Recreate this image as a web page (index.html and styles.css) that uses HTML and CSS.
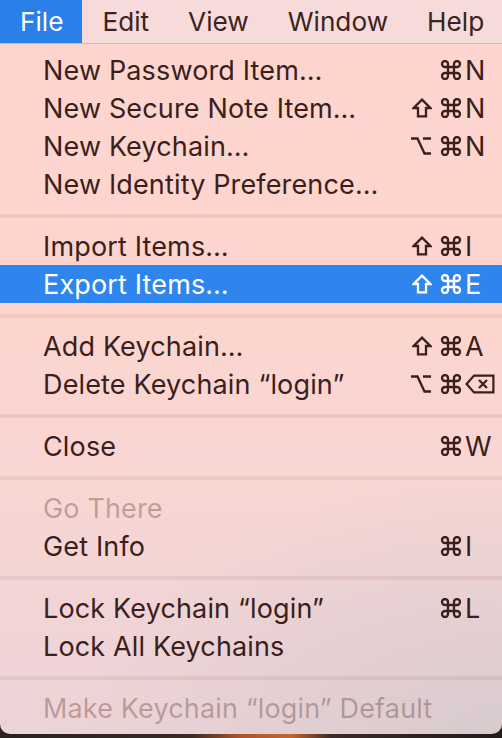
FILE: index.html
```html
<!DOCTYPE html>
<html lang="en">
<head>
<meta charset="utf-8">
<title>Keychain File Menu</title>
<link rel="stylesheet" href="styles.css">
</head>
<body>
<div class="screen">
  <header class="menubar">
    <span class="mb-item active">File</span>
    <span class="mb-item">Edit</span>
    <span class="mb-item">View</span>
    <span class="mb-item">Window</span>
    <span class="mb-item">Help</span>
  </header>
  <div class="menu">
    <div class="row">
      <span class="label">New Password Item…</span>
      <span class="mods"><svg class="ic cmd" viewBox="2 2 20 20"><path d="M15 6v12a3 3 0 1 0 3-3H6a3 3 0 1 0 3 3V6a3 3 0 1 0-3 3h12a3 3 0 1 0-3-3"/></svg></span>
      <span class="key">N</span>
    </div>
    <div class="row">
      <span class="label">New Secure Note Item…</span>
      <span class="mods"><svg class="ic shift" viewBox="0 0 20 20"><path d="M10 1.6 18.4 10H14v8.4H6V10H1.6Z"/></svg><svg class="ic cmd" viewBox="2 2 20 20"><path d="M15 6v12a3 3 0 1 0 3-3H6a3 3 0 1 0 3 3V6a3 3 0 1 0-3 3h12a3 3 0 1 0-3-3"/></svg></span>
      <span class="key">N</span>
    </div>
    <div class="row">
      <span class="label">New Keychain…</span>
      <span class="mods"><svg class="ic opt" viewBox="0 0 22 20"><path d="M1 2.5h6.5l7 15H21M13 2.5h8"/></svg><svg class="ic cmd" viewBox="2 2 20 20"><path d="M15 6v12a3 3 0 1 0 3-3H6a3 3 0 1 0 3 3V6a3 3 0 1 0-3 3h12a3 3 0 1 0-3-3"/></svg></span>
      <span class="key">N</span>
    </div>
    <div class="row">
      <span class="label">New Identity Preference…</span>
    </div>
    <div class="sep"></div>
    <div class="row">
      <span class="label">Import Items…</span>
      <span class="mods"><svg class="ic shift" viewBox="0 0 20 20"><path d="M10 1.6 18.4 10H14v8.4H6V10H1.6Z"/></svg><svg class="ic cmd" viewBox="2 2 20 20"><path d="M15 6v12a3 3 0 1 0 3-3H6a3 3 0 1 0 3 3V6a3 3 0 1 0-3 3h12a3 3 0 1 0-3-3"/></svg></span>
      <span class="key">I</span>
    </div>
    <div class="row selected">
      <span class="label">Export Items…</span>
      <span class="mods"><svg class="ic shift" viewBox="0 0 20 20"><path d="M10 1.6 18.4 10H14v8.4H6V10H1.6Z"/></svg><svg class="ic cmd" viewBox="2 2 20 20"><path d="M15 6v12a3 3 0 1 0 3-3H6a3 3 0 1 0 3 3V6a3 3 0 1 0-3 3h12a3 3 0 1 0-3-3"/></svg></span>
      <span class="key">E</span>
    </div>
    <div class="sep"></div>
    <div class="row">
      <span class="label">Add Keychain…</span>
      <span class="mods"><svg class="ic shift" viewBox="0 0 20 20"><path d="M10 1.6 18.4 10H14v8.4H6V10H1.6Z"/></svg><svg class="ic cmd" viewBox="2 2 20 20"><path d="M15 6v12a3 3 0 1 0 3-3H6a3 3 0 1 0 3 3V6a3 3 0 1 0-3 3h12a3 3 0 1 0-3-3"/></svg></span>
      <span class="key">A</span>
    </div>
    <div class="row">
      <span class="label">Delete Keychain “login”</span>
      <span class="mods"><svg class="ic opt" viewBox="0 0 22 20"><path d="M1 2.5h6.5l7 15H21M13 2.5h8"/></svg><svg class="ic cmd" viewBox="2 2 20 20"><path d="M15 6v12a3 3 0 1 0 3-3H6a3 3 0 1 0 3 3V6a3 3 0 1 0-3 3h12a3 3 0 1 0-3-3"/></svg></span>
      <span class="key"><svg class="ic del" viewBox="0 0 30 20"><path d="M9 1.6h19.4v16.8H9L1.6 10Z"/><path d="M14 6l8 8M22 6l-8 8"/></svg></span>
    </div>
    <div class="sep"></div>
    <div class="row">
      <span class="label">Close</span>
      <span class="mods"><svg class="ic cmd" viewBox="2 2 20 20"><path d="M15 6v12a3 3 0 1 0 3-3H6a3 3 0 1 0 3 3V6a3 3 0 1 0-3 3h12a3 3 0 1 0-3-3"/></svg></span>
      <span class="key">W</span>
    </div>
    <div class="sep"></div>
    <div class="row disabled">
      <span class="label">Go There</span>
    </div>
    <div class="row">
      <span class="label">Get Info</span>
      <span class="mods"><svg class="ic cmd" viewBox="2 2 20 20"><path d="M15 6v12a3 3 0 1 0 3-3H6a3 3 0 1 0 3 3V6a3 3 0 1 0-3 3h12a3 3 0 1 0-3-3"/></svg></span>
      <span class="key">I</span>
    </div>
    <div class="sep"></div>
    <div class="row">
      <span class="label">Lock Keychain “login”</span>
      <span class="mods"><svg class="ic cmd" viewBox="2 2 20 20"><path d="M15 6v12a3 3 0 1 0 3-3H6a3 3 0 1 0 3 3V6a3 3 0 1 0-3 3h12a3 3 0 1 0-3-3"/></svg></span>
      <span class="key">L</span>
    </div>
    <div class="row">
      <span class="label">Lock All Keychains</span>
    </div>
    <div class="sep"></div>
    <div class="row disabled">
      <span class="label">Make Keychain “login” Default</span>
    </div>
  </div>
</div>
</body>
</html>
```

FILE: styles.css
```css
* { box-sizing: border-box; }

html, body {
  margin: 0;
  padding: 0;
}

body {
  width: 502px;
  height: 738px;
  overflow: hidden;
  font-family: Inter, "Noto Sans", "Liberation Sans", sans-serif;
  font-size: 26px;
  color: #3a1f1c;
  background: linear-gradient(90deg, #2a2220 0%, #3a2a24 38%, #b0552c 48%, #c4662e 58%, #3b2a25 66%, #231c1b 100%);
}

.screen {
  display: flex;
  flex-direction: column;
  width: 502px;
  height: 738px;
}

.menubar {
  display: flex;
  height: 44px;
  background: #f7dbdb;
  border-bottom: 1px solid #dcb4b1;
  line-height: 43px;
  font-size: 26.2px;
}

.mb-item {
  padding: 0 19px 0 20px;
  color: #3a2321;
}

.mb-item.active {
  background: #2a80e8;
  color: #ffffff;
}

.menu {
  display: flex;
  flex-direction: column;
  padding: 7px 0;
  font-size: 27px;
  letter-spacing: 0.15px;
  border-radius: 0 0 10px 10px;
  background:
    radial-gradient(ellipse 420px 260px at 100% 100%, rgba(200, 196, 200, 0.55), rgba(200, 196, 200, 0) 100%),
    linear-gradient(180deg, #fed5ce 0%, #fdd5cf 40%, #f7d6d3 65%, #f1d4d6 85%, #ecd3d6 100%);
}

.row {
  display: grid;
  grid-template-columns: 1fr auto 32px;
  column-gap: 3px;
  align-items: center;
  height: 38px;
  padding: 0 5px 0 43px;
}

.label {
  white-space: nowrap;
}

.mods {
  display: flex;
  align-items: center;
  justify-content: flex-end;
  gap: 8px;
}

.key {
  display: flex;
  align-items: center;
}

.ic {
  display: block;
  fill: none;
  stroke: currentColor;
  stroke-width: 2.3;
  stroke-linejoin: miter;
}

.ic.cmd { width: 22px; height: 20px; }
.ic.shift { width: 20px; height: 20px; }
.ic.opt { width: 22px; height: 20px; }
.ic.del { width: 30px; height: 20px; stroke-width: 2.2; }

.row.selected {
  background: #2e85ee;
  color: #ffffff;
}

.row.disabled {
  color: rgba(90, 45, 40, 0.34);
}

.sep {
  height: 24px;
  padding-top: 11px;
}

.sep::before {
  content: "";
  display: block;
  height: 4px;
  background: rgba(150, 80, 70, 0.1);
}
```
